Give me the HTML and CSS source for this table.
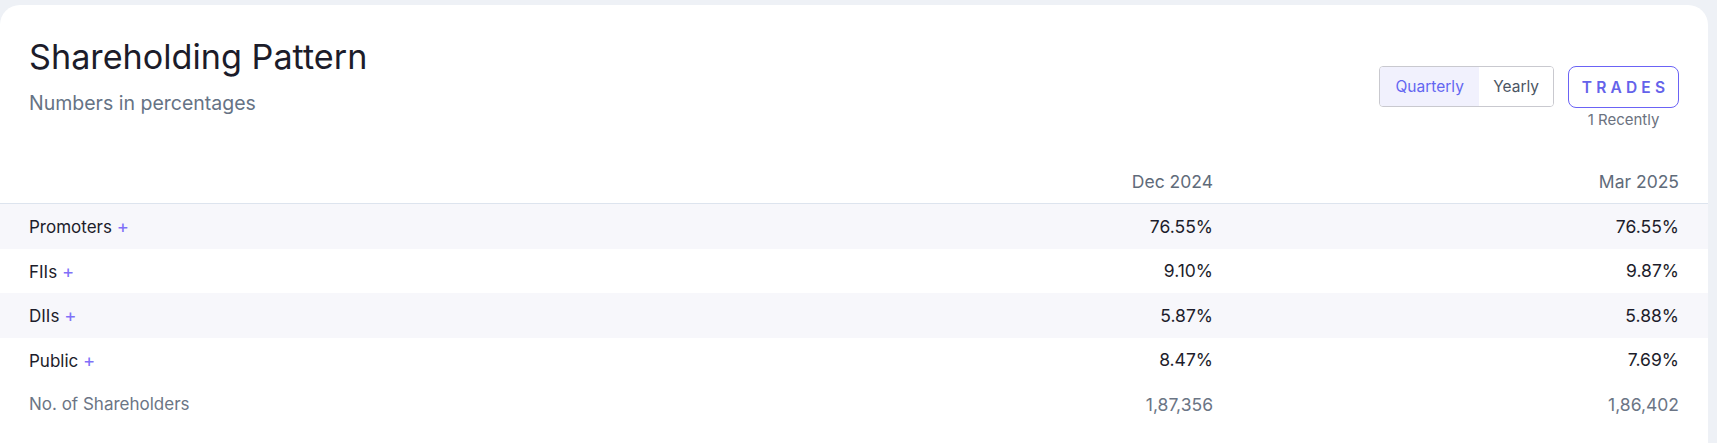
FILE: index.html
```html
<!DOCTYPE html>
<html lang="en">
<head>
    <meta charset="UTF-8">
    <meta name="viewport" content="width=device-width, initial-scale=1.0">
    <title>Shareholding Pattern</title>
    <link rel="stylesheet" href="styles.css">
</head>
<body>
    <div class="card">
        <div class="card-head">
            <div>
                <h2 class="title">Shareholding Pattern</h2>
                <p class="subtitle">Numbers in percentages</p>
            </div>
            <div class="actions">
                <div class="toggle">
                    <button class="toggle-btn active">Quarterly</button>
                    <button class="toggle-btn">Yearly</button>
                </div>
                <div class="trades">
                    <button class="trades-btn">TRADES</button>
                    <span class="trades-note">1 Recently</span>
                </div>
            </div>
        </div>

        <table class="holding">
            <thead>
                <tr>
                    <th></th>
                    <th>Dec 2024</th>
                    <th>Mar 2025</th>
                </tr>
            </thead>
            <tbody>
                <tr class="stripe">
                    <td>Promoters <span class="plus">+</span></td>
                    <td>76.55%</td>
                    <td>76.55%</td>
                </tr>
                <tr>
                    <td>FIIs <span class="plus">+</span></td>
                    <td>9.10%</td>
                    <td>9.87%</td>
                </tr>
                <tr class="stripe">
                    <td>DIIs <span class="plus">+</span></td>
                    <td>5.87%</td>
                    <td>5.88%</td>
                </tr>
                <tr>
                    <td>Public <span class="plus">+</span></td>
                    <td>8.47%</td>
                    <td>7.69%</td>
                </tr>
                <tr class="muted">
                    <td>No. of Shareholders</td>
                    <td>1,87,356</td>
                    <td>1,86,402</td>
                </tr>
            </tbody>
        </table>
    </div>
</body>
</html>
```

FILE: styles.css
```css
body {
    margin: 0;
    padding: 5px 9px 0 0;
    background: #eef1f6;
    font-family: Inter, "Noto Sans", sans-serif;
    color: #1d1d2b;
}
.card {
    background: white;
    border-radius: 20px;
    min-height: 460px;
}
.card-head {
    display: flex;
    justify-content: space-between;
    padding: 30px 29px 0 29px;
}
.title {
    margin: 0;
    font-size: 34.2px;
    font-weight: 400;
    line-height: 44px;
    color: #1c1c2a;
}
.subtitle {
    margin: 12px 0 0;
    font-size: 19.5px;
    color: #667385;
}
.actions {
    display: flex;
    align-items: flex-start;
    gap: 14px;
    padding-top: 31px;
}
.toggle {
    display: flex;
    border: 1px solid #c9c9cf;
    border-radius: 4px;
    overflow: hidden;
    height: 41px;
    box-sizing: border-box;
}
.toggle-btn {
    border: none;
    background: white;
    font-family: inherit;
    font-size: 15.5px;
    color: #4b5563;
    padding: 0 14px;
    cursor: pointer;
}
.toggle-btn.active {
    background: #f1f1fd;
    color: #6366f1;
    width: 99px;
}
.trades {
    display: flex;
    flex-direction: column;
    align-items: center;
}
.trades-btn {
    width: 111px;
    height: 42px;
    border: 1.5px solid #6b63f5;
    border-radius: 8px;
    background: white;
    color: #6462ea;
    font-family: inherit;
    font-size: 15.5px;
    font-weight: 600;
    letter-spacing: 4.2px;
    padding: 0 0 0 4px;
    cursor: pointer;
}
.trades-note {
    margin-top: 2px;
    font-size: 15px;
    color: #6b7280;
}
.holding {
    width: 100%;
    border-collapse: collapse;
    margin-top: 26px;
    font-size: 17.5px;
}
.holding th {
    font-weight: 400;
    color: #5f6b7a;
    text-align: right;
    height: 44px;
    padding: 4px 29px 0 0;
    border-bottom: 1.5px solid #dde4ee;
}
.holding td {
    height: 44.5px;
    padding: 0 29px 0 0;
    text-align: right;
}
.holding td:first-child {
    text-align: left;
    padding-left: 29px;
    font-size: 17px;
}
.holding th:nth-child(2),
.holding th:nth-child(3) {
    width: 437px;
}
.stripe {
    background: #f7f7fb;
}
.plus {
    color: #8070f8;
    font-size: 18.5px;
}
.muted td {
    color: #6b7585;
}
```
